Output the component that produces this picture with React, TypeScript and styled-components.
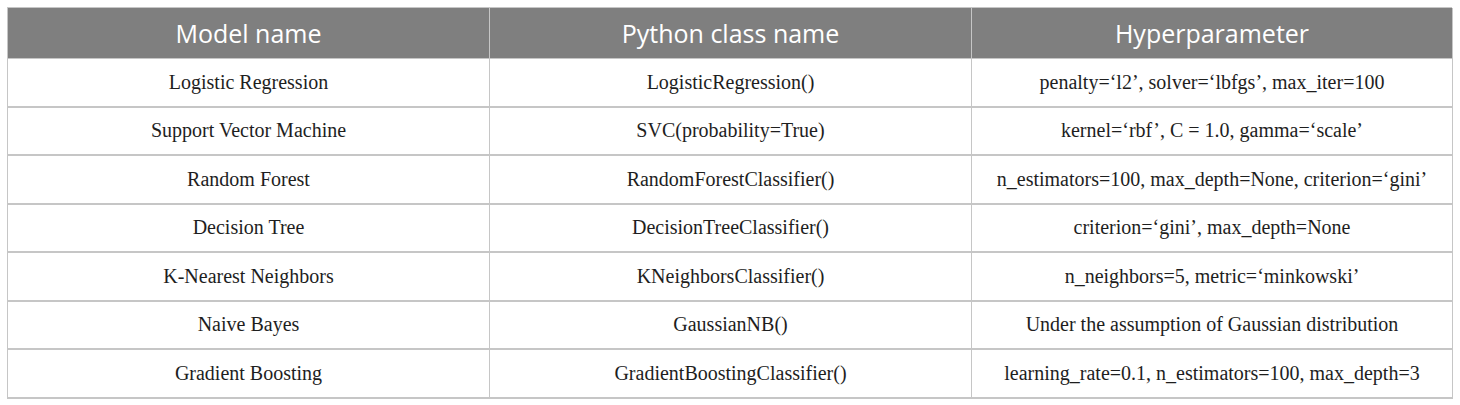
import React from "react";
import styled, { createGlobalStyle } from "styled-components";

const Global = createGlobalStyle`
  html, body { margin: 0; padding: 0; background: #ffffff; }
`;

const Page = styled.div`
  padding: 7px 8px 0 7px;
`;

const Table = styled.div`
  display: grid;
  grid-template-columns: 482px 482px 481px;
  width: 1445px;
  border-top: 1px solid #c6c6c6;
  border-left: 1px solid #c6c6c6;
  box-sizing: border-box;
`;

const HeadCell = styled.div`
  height: 51px;
  background: #7f7f7f;
  color: #ffffff;
  font-family: "Open Sans", Lato, sans-serif;
  font-size: 25px;
  display: flex;
  align-items: center;
  justify-content: center;
  border-right: 1px solid #c6c6c6;
  border-bottom: 1px solid #c6c6c6;
  box-sizing: border-box;
`;

const Cell = styled.div`
  height: 48.5px;
  color: #1e1e1e;
  font-family: "Liberation Serif", "Times New Roman", serif;
  font-size: 20px;
  display: flex;
  align-items: center;
  justify-content: center;
  border-right: 1px solid #c6c6c6;
  border-bottom: 2px solid #c6c6c6;
  box-sizing: border-box;
`;

const rows: [string, string, string][] = [
  ["Logistic Regression", "LogisticRegression()", "penalty=\u2018l2\u2019, solver=\u2018lbfgs\u2019, max_iter=100"],
  ["Support Vector Machine", "SVC(probability=True)", "kernel=\u2018rbf\u2019, C = 1.0, gamma=\u2018scale\u2019"],
  ["Random Forest", "RandomForestClassifier()", "n_estimators=100, max_depth=None, criterion=\u2018gini\u2019"],
  ["Decision Tree", "DecisionTreeClassifier()", "criterion=\u2018gini\u2019, max_depth=None"],
  ["K-Nearest Neighbors", "KNeighborsClassifier()", "n_neighbors=5, metric=\u2018minkowski\u2019"],
  ["Naive Bayes", "GaussianNB()", "Under the assumption of Gaussian distribution"],
  ["Gradient Boosting", "GradientBoostingClassifier()", "learning_rate=0.1, n_estimators=100, max_depth=3"],
];

export default function App() {
  return (
    <Page>
      <Global />
      <Table>
        <HeadCell>Model name</HeadCell>
        <HeadCell>Python class name</HeadCell>
        <HeadCell>Hyperparameter</HeadCell>
        {rows.map((r) =>
          r.map((c, i) => <Cell key={r[0] + i}>{c}</Cell>)
        )}
      </Table>
    </Page>
  );
}
